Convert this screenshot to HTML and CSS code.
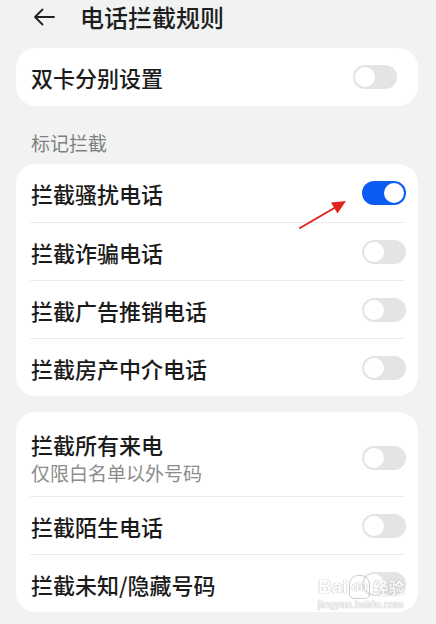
FILE: index.html
```html
<!DOCTYPE html>
<html lang="zh-CN">
<head>
  <meta charset="UTF-8" />
  <meta name="viewport" content="width=device-width, initial-scale=1.0"/>
  <title>电话拦截规则</title>
  <link rel="stylesheet" href="styles.css">
</head>
<body>

  <header class="topbar">
    <svg class="back" width="22" height="18" viewBox="0 0 22 18">
      <path d="M21 9H2M9.5 1.5L2 9l7.5 7.5" fill="none" stroke="#222" stroke-width="1.8" stroke-linecap="round" stroke-linejoin="round"/>
    </svg>
    <h1>电话拦截规则</h1>
  </header>

  <section class="card">
    <div class="row">
      <span class="label">双卡分别设置</span>
      <span class="switch switch-inset"></span>
    </div>
  </section>

  <div class="section-title">标记拦截</div>

  <section class="card">
    <div class="row">
      <span class="label">拦截骚扰电话</span>
      <span class="switch on"></span>
    </div>
    <div class="row">
      <span class="label">拦截诈骗电话</span>
      <span class="switch"></span>
    </div>
    <div class="row">
      <span class="label">拦截广告推销电话</span>
      <span class="switch"></span>
    </div>
    <div class="row">
      <span class="label">拦截房产中介电话</span>
      <span class="switch"></span>
    </div>
  </section>

  <section class="card card-gap">
    <div class="row row-tall">
      <div>
        <div class="label">拦截所有来电</div>
        <div class="sub">仅限白名单以外号码</div>
      </div>
      <span class="switch"></span>
    </div>
    <div class="row">
      <span class="label">拦截陌生电话</span>
      <span class="switch"></span>
    </div>
    <div class="row">
      <span class="label">拦截未知/隐藏号码</span>
      <span class="switch"></span>
    </div>
  </section>

  <!-- annotation arrow drawn over the screenshot -->
  <svg class="mark" width="436" height="624" viewBox="0 0 436 624">
    <line x1="300" y1="228" x2="336" y2="207" stroke="#e0231d" stroke-width="2" stroke-linecap="round"/>
    <polygon points="346,201 331,202.5 337.5,213.5" fill="#e0231d"/>
  </svg>

  <div class="watermark">
    <div class="wm-logo"><span>Bai</span><span class="wm-du">du</span><span class="wm-cn">经验</span></div>
    <div class="wm-url">jingyan.baidu.com</div>
  </div>

</body>
</html>
```

FILE: styles.css
```css
body {
  margin: 0;
  padding: 0 18px 0 16px;
  background: #f1f3f2;
  font-family: "Noto Sans CJK SC", "Noto Sans", sans-serif;
  color: #1b1b1b;
  position: relative;
  height: 624px;
  overflow: hidden;
}
.topbar {
  display: flex;
  align-items: center;
  height: 34px;
  margin-bottom: 14px;
  padding-left: 17px;
}
.back {
  margin-right: 25px;
}
.topbar h1 {
  margin: 0;
  font-size: 24px;
  font-weight: 500;
  line-height: 34px;
  color: #1e1e1e;
}
.card {
  background: #fff;
  border-radius: 20px;
  padding: 0 14px;
}
.card-gap {
  margin-top: 16px;
}
.row {
  display: flex;
  align-items: center;
  justify-content: space-between;
  height: 57px;
  padding-left: 1px;
}
.row + .row {
  border-top: 1px solid #ececec;
}
.card > .row:first-child {
  height: 58px;
}
.card > .row.row-tall {
  height: 84px;
  align-items: flex-start;
  padding-top: 17px;
  box-sizing: border-box;
}
.row-tall .switch {
  margin-top: 17px;
}
.label {
  font-size: 22px;
  font-weight: 500;
  line-height: 30px;
}
.sub {
  font-size: 19px;
  line-height: 28px;
  color: #8c8c8c;
}
.section-title {
  padding: 24px 0 9px 15px;
  font-size: 19px;
  line-height: 25px;
  color: #808080;
}
/* toggle switches */
.switch {
  position: relative;
  flex: none;
  width: 44px;
  height: 24px;
  border-radius: 12px;
  background: #e4e4e4;
  margin-right: -2px;
}
.switch::after {
  content: "";
  position: absolute;
  top: 2px;
  left: 2px;
  width: 20px;
  height: 20px;
  border-radius: 50%;
  background: #fff;
}
.switch.on {
  background: #0a5cf5;
}
.switch.on::after {
  left: 22px;
}
.switch-inset {
  margin-right: 7px;
}
.mark {
  position: absolute;
  left: 0;
  top: 0;
  pointer-events: none;
}
.watermark {
  position: absolute;
  left: 318px;
  top: 576px;
  color: #fff;
  opacity: 0.85;
  text-shadow: 0 0 1px #a9a9a9, 0 0 1px #a9a9a9;
  pointer-events: none;
}
.wm-logo {
  display: flex;
  align-items: center;
  font-family: "Liberation Sans", sans-serif;
  font-size: 19px;
  font-weight: 700;
  line-height: 22px;
}
.wm-du {
  font-size: 13px;
  margin: 0 3px 0 2px;
  padding: 0 2px;
  border-radius: 8px 8px 4px 4px;
  box-shadow: 0 0 0 1px #c4c4c4;
}
.wm-cn {
  font-family: "Noto Sans CJK SC", sans-serif;
  font-size: 16px;
}
.wm-url {
  font-family: "Liberation Sans", sans-serif;
  font-size: 10px;
  line-height: 12px;
  letter-spacing: 0.3px;
  margin-top: 1px;
}
```
